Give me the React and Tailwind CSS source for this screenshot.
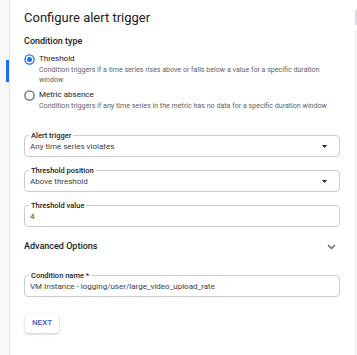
import React from "react";

function Field({ label, value, select }) {
  return (
    <div className="relative h-[22px] w-[316px] rounded-[4px] border border-[#c9ccd0] flex items-center pl-[5px] pr-[10px]">
      <span className="absolute left-[4px] top-0 -translate-y-1/2 bg-white px-[2px] text-[7.5px] leading-[8px] font-medium text-[#202124]">
        {label}
      </span>
      <span className="flex-1 text-[8px] leading-[10px] text-[#3c4043] mt-[1px]">{value}</span>
      {select && (
        <svg width="5" height="3" viewBox="0 0 5 3" className="mr-[2px]">
          <path d="M0 0 L5 0 L2.5 3 Z" fill="#202124" />
        </svg>
      )}
    </div>
  );
}

function Radio({ checked }) {
  return (
    <svg width="11" height="11" viewBox="0 0 11 11" className="shrink-0">
      <circle cx="5.5" cy="5.5" r="4.6" fill="none" stroke={checked ? "#1a73e8" : "#5f6368"} strokeWidth="1.3" />
      {checked && <circle cx="5.5" cy="5.5" r="2.5" fill="#1a73e8" />}
    </svg>
  );
}

export default function App() {
  return (
    <div
      className="w-[357px] h-[355px] bg-white flex overflow-hidden"
      style={{ fontFamily: "Roboto, 'Liberation Sans', sans-serif" }}
    >
      <div className="w-[10px] h-full bg-[#f8f9fa] border-r border-[#e3e5e8] flex flex-col">
        <div className="mt-[60px] ml-[6px] w-[3px] h-[22px] bg-[#1a73e8]" />
      </div>
      <div className="flex-1 flex flex-col pl-[14px] pt-[9px]">
        <div className="h-[18px] leading-[18px] text-[13px] text-[#202124]">Configure alert trigger</div>
        <div className="mt-[7px] h-[14px] leading-[14px] text-[9px] font-medium text-[#202124]">Condition type</div>
        <div className="mt-[5px] flex items-center gap-[4px] h-[12px]">
          <Radio checked />
          <span className="text-[8px] leading-[12px] text-[#202124]">Threshold</span>
        </div>
        <div className="ml-[15px] w-[300px] text-[7.1px] leading-[10px] text-[#5f6368]">
          Condition triggers if a time series rises above or falls below a value for a specific duration window
        </div>
        <div className="mt-[4px] flex items-center gap-[4px] h-[12px]">
          <Radio />
          <span className="text-[8px] leading-[12px] text-[#202124]">Metric absence</span>
        </div>
        <div className="ml-[15px] w-[310px] text-[7.1px] leading-[10px] text-[#5f6368]">
          Condition triggers if any time series in the metric has no data for a specific duration window
        </div>
        <div className="mt-[24px] flex flex-col gap-[13px]">
          <Field label="Alert trigger" value="Any time series violates" select />
          <Field label="Threshold position" value="Above threshold" select />
          <Field label="Threshold value" value="4" />
        </div>
        <div className="mt-[12px] h-[16px] w-[316px] flex items-center justify-between">
          <span className="text-[9px] font-medium text-[#202124]">Advanced Options</span>
          <svg width="9" height="6" viewBox="0 0 9 6" className="mr-[4px]">
            <path d="M1 1 L4.5 4.5 L8 1" fill="none" stroke="#5f6368" strokeWidth="1.3" />
          </svg>
        </div>
        <div className="mt-[20px]">
          <Field label="Condition name *" value="VM Instance - logging/user/large_video_upload_rate" />
        </div>
        <div className="mt-[11px] pl-[1px]">
          <button className="h-[19px] w-[34px] rounded-[3px] bg-white text-[8px] font-medium text-[#3f5fcf] shadow-[0_1px_3px_rgba(60,64,67,0.3)]">
            NEXT
          </button>
        </div>
      </div>
      <div className="w-[2px] h-full flex flex-col">
        <div className="mt-[10px] h-[15px] w-[2px] bg-[#dadce0]" />
        <div className="mt-[5px] flex-1 w-[1px] bg-[#e8eaed]" />
      </div>
    </div>
  );
}
